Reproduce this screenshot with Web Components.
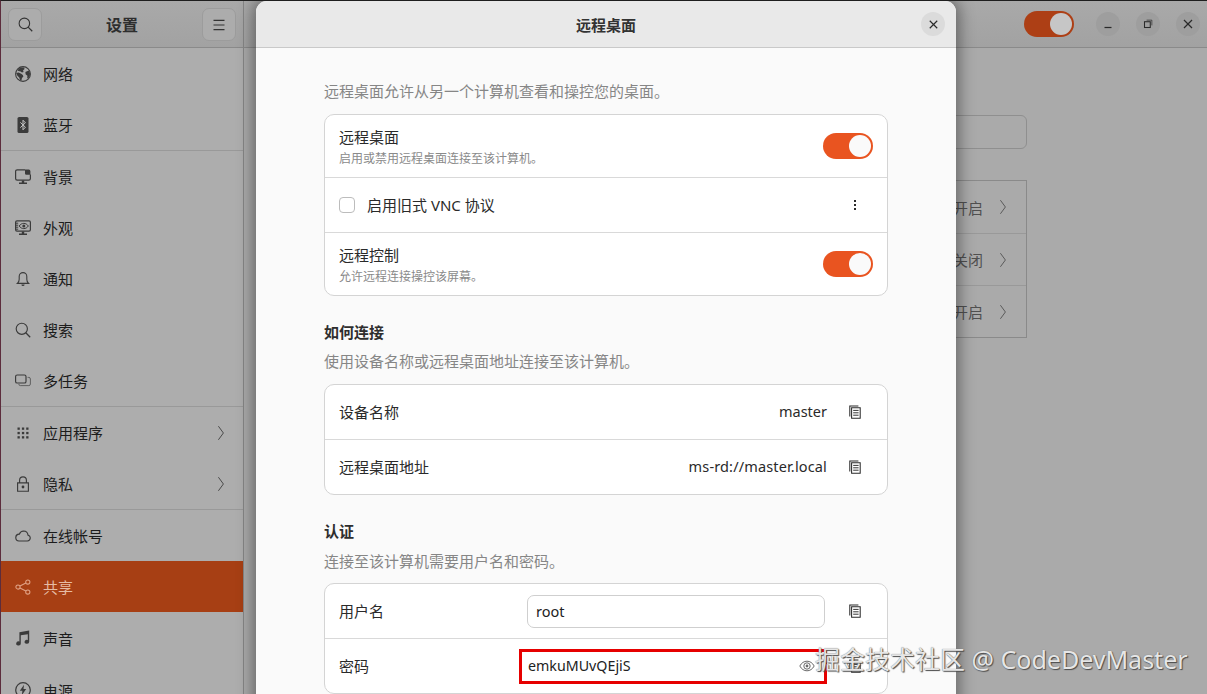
<!DOCTYPE html>
<html lang="zh-CN">
<head>
<meta charset="utf-8">
<title>设置</title>
<style>
html,body{margin:0;padding:0;background:#aaa;overflow:hidden}
body{font-family:"Noto Sans","Noto Sans CJK SC",sans-serif;font-size:15px}
</style>
</head>
<body>
<desktop-frame>
  <settings-window>
    <side-bar slot="side">
      <side-row icon="globe">网络</side-row>
      <side-row icon="bluetooth">蓝牙</side-row>
      <side-sep></side-sep>
      <side-row icon="background">背景</side-row>
      <side-row icon="appearance">外观</side-row>
      <side-row icon="bell">通知</side-row>
      <side-row icon="search">搜索</side-row>
      <side-row icon="tasks">多任务</side-row>
      <side-sep></side-sep>
      <side-row icon="apps" more>应用程序</side-row>
      <side-row icon="lock" more>隐私</side-row>
      <side-sep></side-sep>
      <side-row icon="cloud">在线帐号</side-row>
      <side-row icon="share" selected>共享</side-row>
      <side-row icon="music" style="height:52px">声音</side-row>
      <side-row icon="power" style="height:52px">电源</side-row>
    </side-bar>
    <back-list>
      <back-row>开启</back-row>
      <back-row>关闭</back-row>
      <back-row>开启</back-row>
    </back-list>
  </settings-window>

  <dialog-window heading="远程桌面">
    <p-note>远程桌面允许从另一个计算机查看和操控您的桌面。</p-note>
    <pref-card>
      <pref-row tall>
        <row-title sub="启用或禁用远程桌面连接至该计算机。">远程桌面</row-title>
        <toggle-switch slot="end"></toggle-switch>
      </pref-row>
      <pref-row>
        <check-box>启用旧式 VNC 协议</check-box>
        <x-icon slot="end" name="kebab" size="16"></x-icon>
      </pref-row>
      <pref-row tall>
        <row-title sub="允许远程连接操控该屏幕。">远程控制</row-title>
        <toggle-switch slot="end"></toggle-switch>
      </pref-row>
    </pref-card>

    <pref-section heading="如何连接" desc="使用设备名称或远程桌面地址连接至该计算机。">
      <pref-card>
        <pref-row>
          <row-title>设备名称</row-title>
          <row-value slot="value">master</row-value>
          <x-icon slot="end" name="copy" size="16"></x-icon>
        </pref-row>
        <pref-row>
          <row-title>远程桌面地址</row-title>
          <row-value slot="value" style="letter-spacing:.15px">ms-rd://master.local</row-value>
          <x-icon slot="end" name="copy" size="16"></x-icon>
        </pref-row>
      </pref-card>
    </pref-section>

    <pref-section heading="认证" desc="连接至该计算机需要用户名和密码。" style="--desc-gap:11px;--head-gap:9px">
      <pref-card>
        <pref-row>
          <row-title>用户名</row-title>
          <text-entry slot="value">root</text-entry>
          <x-icon slot="end" name="copy" size="16"></x-icon>
        </pref-row>
        <pref-row>
          <row-title>密码</row-title>
          <text-entry slot="value" marked>emkuMUvQEjiS</text-entry>
          <x-icon slot="end" name="copy" size="16"></x-icon>
        </pref-row>
      </pref-card>
    </pref-section>
  </dialog-window>

  <water-mark>掘金技术社区 @ CodeDevMaster</water-mark>
</desktop-frame>

<script>
const ICONS = {
  globe:`<circle cx="8" cy="8" r="7.4" fill="none" stroke="currentColor" stroke-width="1.1"/><path fill="currentColor" d="M5.2 1.6 9 1.4l.6 1.6L8 4.6 8.6 6 7 6.6 5.6 5.4 3.4 5 2.4 4.2ZM1.2 7l2.4-.6 2.6 1.4 1.6 1.2.6 1.4-1.4 1.6-.6 2.6-1.2-.4-1-2.8-1.8-1.6ZM10.4 6l3.4-1.4 1.2 2.6-.2 2.8-1.6 2.6-1-.4.2-2.4-1.8-1.6Z"/>`,
  bluetooth:`<rect x="2.5" y="0" width="11" height="16" rx="1.6" fill="currentColor"/><path fill="none" stroke="#c4c4c4" stroke-width="1" d="M5.4 5.4 10.4 10.2 8 12.8V3.2l2.4 2.6-5 4.8"/>`,
  background:`<path fill="none" stroke="currentColor" stroke-width="1.2" d="M10 .8H2.2A1.6 1.6 0 0 0 .6 2.4v7.2a1.6 1.6 0 0 0 1.6 1.6h11.6a1.6 1.6 0 0 0 1.6-1.6V5.6"/><path fill="currentColor" d="M10 .6h3.8a1.6 1.6 0 0 1 1.6 1.6v3.6h-4A1.4 1.4 0 0 1 10 4.4ZM6.8 11.4h2.4V13.6H6.8ZM4 13.4h8V15H4Z"/>`,
  appearance:`<rect x=".6" y=".8" width="14.8" height="10.4" rx="1.4" fill="none" stroke="currentColor" stroke-width="1.2"/><path fill="none" stroke="currentColor" stroke-width="1" d="M.8 3.2h2.4M.8 5.2h2.4M.8 7.2h2.4M.8 9.2h2.4"/><path fill="none" stroke="currentColor" stroke-width="1" d="M4.2 6c1.2-1.8 2.8-2.6 4.6-2.6S12 4.2 13.4 6c-1.4 1.8-2.8 2.6-4.6 2.6S5.4 7.8 4.2 6Z"/><circle cx="8.8" cy="6" r="1.5" fill="currentColor"/><path fill="currentColor" d="M6.8 11.4h2.4V13.6H6.8ZM4 13.4h8V15H4Z"/>`,
  bell:`<path fill="none" stroke="currentColor" stroke-width="1.1" d="M2.4 12.4h11.2c-1.2-1-1.8-2.2-1.8-4.2V5.4a3.8 3.8 0 0 0-7.6 0v2.8c0 2-.6 3.2-1.8 4.2Z"/><path fill="currentColor" d="M6.4 13.4h3.2a1.6 1.6 0 0 1-3.2 0Z"/>`,
  search:`<circle cx="6.8" cy="6.8" r="5.6" fill="none" stroke="currentColor" stroke-width="1.15"/><path stroke="currentColor" stroke-width="1.3" d="m10.8 10.8 4.4 4.4"/>`,
  tasks:`<rect x=".6" y="2" width="10.4" height="8" rx="1.6" fill="none" stroke="currentColor" stroke-width="1.15"/><path fill="none" stroke="currentColor" stroke-width=".9" opacity=".75" d="M12.6 4.4h1.2a1.6 1.6 0 0 1 1.6 1.6v5a1.6 1.6 0 0 1-1.6 1.6H5.4a1.6 1.6 0 0 1-1.6-1.6"/>`,
  apps:`<g fill="currentColor"><rect x="2.5" y="2.5" width="2.3" height="2.3"/><rect x="6.9" y="2.5" width="2.3" height="2.3"/><rect x="11.2" y="2.5" width="2.3" height="2.3"/><rect x="2.5" y="6.9" width="2.3" height="2.3"/><rect x="6.9" y="6.9" width="2.3" height="2.3"/><rect x="11.2" y="6.9" width="2.3" height="2.3"/><rect x="2.5" y="11.2" width="2.3" height="2.3"/><rect x="6.9" y="11.2" width="2.3" height="2.3"/><rect x="11.2" y="11.2" width="2.3" height="2.3"/></g>`,
  lock:`<path fill="none" stroke="currentColor" stroke-width="1.15" d="M2.6 6.8h10.8v8.4H2.6ZM4.6 6.8V4.2a3.4 3.4 0 0 1 6.8 0v2.6"/><circle cx="8" cy="11" r="1.4" fill="currentColor"/>`,
  cloud:`<path fill="none" stroke="currentColor" stroke-width="1.15" d="M4 13h8.4a3 3 0 0 0 .6-5.9A4.6 4.6 0 0 0 8.6 3 4.6 4.6 0 0 0 4.4 6.2 3.4 3.4 0 0 0 4 13Z"/>`,
  share:`<g fill="none" stroke="currentColor" stroke-width="1.05"><circle cx="3" cy="8" r="2.1"/><circle cx="12.8" cy="3" r="2.1"/><circle cx="12.8" cy="13" r="2.1"/><path d="m4.9 7 6-3M4.9 9l6 3"/></g>`,
  music:`<path fill="currentColor" d="M4.4 2.2 14.2.6V11.8a2.3 2 0 1 1-1.4-1.8V4.2L5.8 5.2V13.4a2.3 2 0 1 1-1.4-1.8Z"/>`,
  power:`<circle cx="8" cy="8" r="7.3" fill="none" stroke="currentColor" stroke-width="1.2"/><path fill="currentColor" d="M9 2.8 4.8 8.8h2.6L6.8 13.2 11.2 7H8.5Z"/>`,
  menu:`<path stroke="currentColor" stroke-width="1.2" d="M2.5 3.4h11M2.5 8h11M2.5 12.6h11"/>`,
  close:`<path stroke="currentColor" stroke-width="1.4" d="m3.4 3.4 9.2 9.2M12.6 3.4l-9.2 9.2"/>`,
  min:`<path stroke="currentColor" stroke-width="1.4" d="M4 12h8"/>`,
  restore:`<rect x="4" y="5.4" width="6.6" height="6.6" fill="none" stroke="currentColor" stroke-width="1.2"/><path fill="none" stroke="currentColor" stroke-width=".8" d="M6.4 3.6h6v6"/>`,
  chevron:`<path fill="none" stroke="currentColor" stroke-width="1" d="m5.4 1.2 5 6.8-5 6.8"/>`,
  kebab:`<g fill="currentColor"><rect x="7" y="3" width="2" height="2"/><rect x="7" y="7" width="2" height="2"/><rect x="7" y="11" width="2" height="2"/></g>`,
  copy:`<g fill="none" stroke="currentColor" stroke-width="1.05"><path d="M4.6 3.8h8.6v10.4H4.6Z"/><path d="M2.8 12.4V2h8.6"/></g><path stroke="currentColor" stroke-width=".95" d="M6.2 6.4h5.4M6.2 8.8h5.4M6.2 11.2h5.4"/>`,
  eye:`<g fill="none" stroke="currentColor"><path stroke-width="1" d="M.8 8C2.6 4.8 5 3.2 8 3.2S13.4 4.8 15.2 8c-1.8 3.2-4.2 4.8-7.2 4.8S2.6 11.2.8 8Z"/><circle cx="8" cy="8" r="3.2" stroke-width="1"/></g><circle cx="8" cy="8" r="1.4" fill="currentColor"/>`
};

function def(name, css, html, init){
  customElements.define(name, class extends HTMLElement{
    constructor(){
      super();
      const r = this.attachShadow({mode:'open'});
      r.innerHTML = `<style>${css}</style>` + (typeof html === 'function' ? html(this) : html);
    }
    connectedCallback(){ if(init) init(this); }
  });
}

customElements.define('x-icon', class extends HTMLElement{
  connectedCallback(){
    const r = this.shadowRoot || this.attachShadow({mode:'open'});
    const s = this.getAttribute('size') || 16;
    r.innerHTML = `<style>:host{display:inline-flex;flex:none;width:${s}px;height:${s}px}svg{display:block;width:100%;height:100%}</style><svg viewBox="0 0 16 16" aria-hidden="true">${ICONS[this.getAttribute('name')]||''}</svg>`;
  }
});

def('desktop-frame',`
  :host{display:block;position:relative;width:1207px;height:694px;overflow:hidden;box-sizing:border-box;
    border-top:1px solid #1e1e1e;border-left:1px solid #5c2c3c;background:#aaa}
`,`<slot></slot>`);

def('settings-window',`
  :host{display:grid;grid-template-columns:243px 1fr;grid-template-rows:47px 1fr;height:100%;background:#aaa}
  header{display:flex;align-items:center;box-sizing:border-box;border-bottom:1px solid #8a8a8a;
    background:linear-gradient(#a9a9a9,#a2a2a2)}
  .left{border-right:1px solid #868686;padding:0 7px 0 7px;justify-content:space-between}
  .left b{font-weight:700;font-size:16px;color:#2e2e2e;margin-top:0}
  .btn{display:flex;align-items:center;justify-content:center;width:34px;height:33px;box-sizing:border-box;margin-top:1px;
    border:1px solid #9c9c9c;border-radius:7px;background:#acacac;color:#333}
  .right{justify-content:flex-end;padding-right:7px;gap:16px}
  .sw{margin-right:6px;width:50px;height:26px;border-radius:13px;background:#ad3f15;position:relative}
  .sw i{position:absolute;right:2px;top:2px;width:22px;height:22px;border-radius:50%;background:#c6c6c6}
  .wb{width:24px;height:24px;border-radius:50%;background:#9e9e9e;color:#2a2a2a;display:flex;align-items:center;justify-content:center}
  .side{grid-column:1;overflow:hidden;border-right:1px solid #868686;background:#adadad}
  .main{overflow:hidden;padding-top:67px}
`,`
  <header class="left">
    <span class="btn"><x-icon name="search" size="15"></x-icon></span>
    <b>设置</b>
    <span class="btn"><x-icon name="menu" size="16"></x-icon></span>
  </header>
  <header class="right">
    <span class="sw"><i></i></span>
    <span class="wb"><x-icon name="min" size="14"></x-icon></span>
    <span class="wb"><x-icon name="restore" size="14"></x-icon></span>
    <span class="wb"><x-icon name="close" size="14"></x-icon></span>
  </header>
  <div class="side"><slot name="side"></slot></div>
  <div class="main"><slot></slot></div>
`);

def('side-bar',`:host{display:block}`,`<slot></slot>`);
def('side-sep',`:host{display:block;height:1px;background:#999}`,``);
def('side-row',`
  :host{display:flex;align-items:center;height:51px;box-sizing:border-box;padding:0 14px 0 14px;gap:12px;
    color:#1c1c1c;font-size:15px;font-family:"Noto Sans CJK SC","Noto Sans",sans-serif}
  :host([selected]){background:#a73f14;color:#e6bca4}
  x-icon{color:#3b3b3b}
  :host([selected]) x-icon{color:#e0a184}
  span{flex:1}
  .c{color:#4a4a4a}
`,(el)=>`<x-icon name="${el.getAttribute('icon')}" size="16"></x-icon><span><slot></slot></span>${el.hasAttribute('more')?'<x-icon class="c" name="chevron" size="16"></x-icon>':''}`);

def('back-list',`
  :host{display:block;width:603px;margin:0 auto;box-sizing:content-box}
  .search{height:34px;box-sizing:border-box;border:1px solid #8f8f8f;border-radius:6px;margin-bottom:31px}
  .list{border:1px solid #8a8a8a}
`,`<div class="search"></div><div class="list"><slot></slot></div>`);
def('back-row',`
  :host{display:flex;align-items:center;justify-content:flex-end;height:52px;box-sizing:border-box;padding-right:15px;gap:12px;
    color:#505050;font-size:15px;font-family:"Noto Sans CJK SC",sans-serif;border-top:1px solid #999}
  :host(:first-child){border-top:0}
  x-icon{color:#5a5a5a}
`,`<span><slot></slot></span><x-icon name="chevron" size="16"></x-icon>`);

def('dialog-window',`
  :host{position:absolute;left:255px;top:0;width:700px;height:720px;box-sizing:border-box;border-radius:11px 11px 0 0;
    background:#fafafa;box-shadow:0 0 16px 3px rgba(0,0,0,.42);overflow:hidden;display:block}
  header{position:relative;display:flex;align-items:center;justify-content:center;height:47px;box-sizing:border-box;
    background:#e9e9e9;border-bottom:1px solid #c9c9c9;font-weight:700;font-size:15px;color:#333;
    font-family:"Noto Sans CJK SC",sans-serif}
  .x{position:absolute;right:11px;top:11px;width:24px;height:24px;border-radius:50%;background:#dbdbdb;color:#2b2b2b;
    display:flex;align-items:center;justify-content:center}
  .body{padding:32px 68px 0}
`,(el)=>`<header>${el.getAttribute('heading')}<span class="x"><x-icon name="close" size="13"></x-icon></span></header><div class="body"><slot></slot></div>`);

def('p-note',`
  :host{display:block;height:22px;line-height:22px;margin-bottom:var(--desc-gap,12px);color:#868686;font-size:15px;
    font-family:"Noto Sans CJK SC",sans-serif}
`,`<slot></slot>`);

def('pref-section',`
  :host{display:block;margin-top:26px}
  h3{margin:0 0 var(--head-gap,8px);height:20px;line-height:20px;font-size:15px;font-weight:700;color:#2e2e2e;font-family:"Noto Sans CJK SC",sans-serif}
`,(el)=>`<h3>${el.getAttribute('heading')}</h3><p-note>${el.getAttribute('desc')}</p-note><slot></slot>`);

def('pref-card',`
  :host{display:block;background:#fff;border:1px solid #d4d4d4;border-radius:10px;overflow:hidden}
`,`<slot></slot>`);

def('pref-row',`
  :host{display:flex;align-items:center;height:55px;box-sizing:border-box;padding:0 24px 0 14px;border-top:1px solid #d9d9d9;color:#2a2a2a}
  :host(:first-child){height:54px;border-top:0}
  :host([tall]){height:63px}
  :host([tall]:first-child){height:62px}
  .m{flex:1;min-width:0}
  .e{display:flex;align-items:center;justify-content:flex-end;margin-left:20px;width:auto}
`,`<div class="m"><slot></slot></div><slot name="value"></slot><div class="e"><slot name="end"></slot></div>`);

def('row-title',`
  :host{display:block;font-size:15px;line-height:20px;color:#2a2a2a;font-family:"Noto Sans CJK SC",sans-serif}
  small{display:block;font-size:12px;line-height:16px;color:#8a8a8a;margin-top:3px}
`,(el)=>`<slot></slot>${el.hasAttribute('sub')?`<small>${el.getAttribute('sub')}</small>`:''}`);

def('row-value',`
  :host{display:block;font-size:14.5px;color:#2a2a2a;font-family:"Noto Sans",sans-serif;padding-bottom:2px}
`,`<slot></slot>`);

def('toggle-switch',`
  :host{display:block;width:50px;height:26px;border-radius:13px;background:#e95420;position:relative;margin-right:-10px}
  i{position:absolute;right:2px;top:2px;width:22px;height:22px;border-radius:50%;background:#fafafa}
`,`<i></i>`);

def('check-box',`
  :host{display:flex;align-items:center;gap:12px;font-size:15px;color:#2a2a2a;font-family:"Noto Sans","Noto Sans CJK SC",sans-serif}
  i{display:block;width:16px;height:16px;box-sizing:border-box;border:1px solid #bcbcbc;border-radius:4px;background:#fff}
  span{padding-bottom:2px}
`,`<i></i><span><slot></slot></span>`);

def('text-entry',`
  :host{display:flex;align-items:center;width:298px;height:33px;margin-right:2px;box-sizing:border-box;border:1px solid #cfcfcf;border-radius:7px;
    padding-left:8px;font-size:14.5px;color:#222;font-family:"Noto Sans",sans-serif;position:relative;background:#fff}
  :host([marked]){width:308px;height:35px;margin-right:0;border:3px solid #e60000;border-radius:0;padding-left:6px;padding-bottom:2px;box-sizing:border-box;font-size:14.25px}
  x-icon{position:absolute;right:10px;top:7px;color:#6a6a6a;display:none}
  :host([marked]) x-icon{display:inline-flex;right:9px;top:6px}
`,`<span><slot></slot></span><x-icon name="eye" size="16"></x-icon>`);

def('water-mark',`
  :host{position:absolute;left:814px;top:641px;font-size:25px;line-height:34px;white-space:nowrap;color:#e6e6e6;
    text-shadow:1px 1px 1px #4a4a4a,0 0 1px #666;font-family:"Noto Sans","Noto Sans CJK SC",sans-serif}
`,`<slot></slot>`);
</script>
</body>
</html>
